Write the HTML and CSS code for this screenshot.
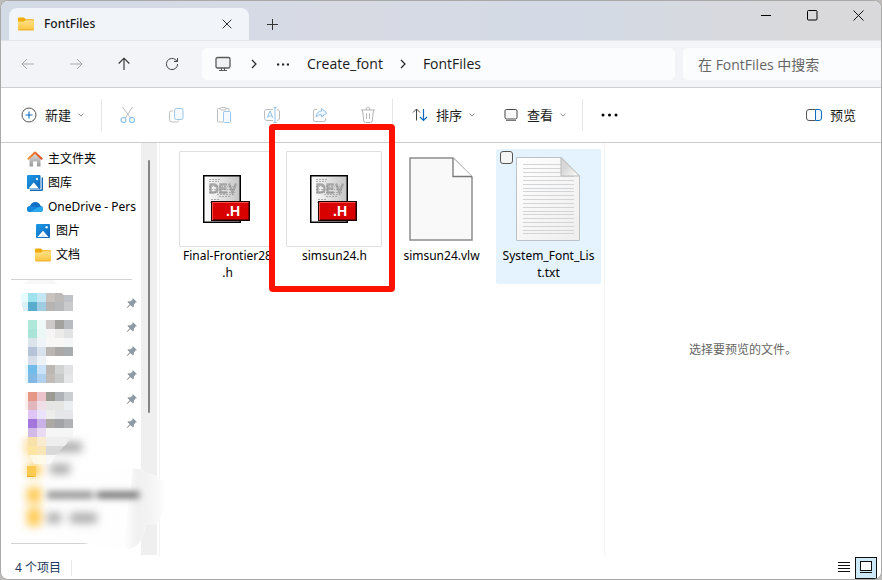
FILE: index.html
```html
<!DOCTYPE html>
<html lang="zh-CN">
<head>
<meta charset="utf-8">
<meta name="viewport" content="width=device-width, initial-scale=1">
<title>FontFiles</title>
<link rel="stylesheet" href="styles.css">
</head>
<body>
<svg class="defs" width="0" height="0" aria-hidden="true">
  <defs>
    <linearGradient id="gFolder" x1="0" y1="0" x2="0" y2="1"><stop offset="0" stop-color="#ffe08a"/><stop offset="1" stop-color="#fbc63c"/></linearGradient>
    <linearGradient id="gBlue" x1="0" y1="0" x2="1" y2="1"><stop offset="0" stop-color="#1d9be6"/><stop offset="1" stop-color="#0b62b8"/></linearGradient>
    <linearGradient id="gHouse" x1="0" y1="0" x2="0" y2="1"><stop offset="0" stop-color="#dedede"/><stop offset="1" stop-color="#9a9a9a"/></linearGradient>
    <linearGradient id="gRoof" x1="0" y1="0" x2="1" y2="0"><stop offset="0" stop-color="#f5963a"/><stop offset="1" stop-color="#dc4a1e"/></linearGradient>
    <linearGradient id="gPaper" x1="0" y1="0" x2="1" y2="1"><stop offset="0" stop-color="#ffffff"/><stop offset="1" stop-color="#eeeeee"/></linearGradient>
    <linearGradient id="gDev" x1="0" y1="0" x2="1" y2="0"><stop offset="0" stop-color="#ffffff"/><stop offset="1" stop-color="#c4c4c4"/></linearGradient>
    <linearGradient id="gFold" x1="0" y1="0" x2="1" y2="1"><stop offset=".4" stop-color="#d8d8d8"/><stop offset=".9" stop-color="#f8f8f8"/></linearGradient>
    <linearGradient id="gTrack" x1="0" y1="0" x2="1" y2="0"><stop offset="0" stop-color="#ffffff"/><stop offset=".35" stop-color="#f1f1f1"/><stop offset=".6" stop-color="#f3f3f3"/><stop offset="1" stop-color="#fdfdfd"/></linearGradient>
    <filter id="soft" filterUnits="userSpaceOnUse" x="0" y="420" width="165" height="130"><feGaussianBlur stdDeviation="4"/></filter>
    <filter id="fine" filterUnits="userSpaceOnUse" x="0" y="420" width="165" height="130"><feGaussianBlur stdDeviation="3"/></filter>
    <symbol id="folder" viewBox="0 0 16 14"><path d="M0 1.5Q0 .5 1 .5h4.6q.6 0 1 .5l1 1.3H15q1 0 1 1V7H0z" fill="#f0ac0c"/><path d="M0 4.6h6l1.6-1.4H15q1 0 1 1V12q0 1.2-1 1.2H1Q0 13.2 0 12z" fill="url(#gFolder)"/><path d="M.3 12.9h15.4" stroke="#e8a72a" stroke-width=".8"/></symbol>
    <symbol id="picture" viewBox="0 0 14 14"><rect width="14" height="14" rx="1" fill="url(#gBlue)"/><circle cx="10.6" cy="3.3" r="1.3" fill="#d8f0ff"/><path d="M1.5 13 7 6.8l5.5 6.2z" fill="#fff"/><path d="M4 13 7 9.6 10 13z" fill="#dcecf8"/></symbol>
    <symbol id="chev" viewBox="0 0 6 4"><path d="M.5.6 3 3.1 5.5.6" fill="none" stroke="#8c8c8c"/></symbol>
    <symbol id="pin" viewBox="0 0 12 12"><path d="M6.8 1 11 5.2 9.6 5.6 8 7.4 7.8 9.7 7 10.5 4.6 8.2 1 11.2.6 10.8 3.7 7.3 1.4 5 2.3 4.3 4.6 4.2 6.5 2.4z" fill="#8f9ba4"/></symbol>
    <symbol id="hfile" viewBox="0 0 48 48">
      <rect x=".75" y=".75" width="36.5" height="46.5" fill="url(#gDev)" stroke="#000" stroke-width="1.5"/>
      <g stroke="#a8a8a8" stroke-dasharray="2 1" stroke-width="1"><path d="M6 4.5h12M6 6.500h10M14 19.500h18M16 21.500h12M8 24.500h8M7 27.500h5"/></g>
      <g fill="none" stroke="#a6a6a6" stroke-width="2.400"><path d="M7.500 9.500h3q4 0 4 4t-4 4h-3zM24 9.500h-6.500v8h6.500M17.500 13.500h6M26 8.500l3.500 9 3.500-9"/></g>
      <path d="M6 11.500h26M6 14.500h26M6 17.500h26" stroke="#8c8c8c" stroke-opacity=".6" stroke-dasharray="2 1 1 1"/>
      <rect x="8.750" y="26.750" width="37.500" height="18.500" fill="#d90000" stroke="#210000" stroke-width="1.500"/>
      <path d="M9.500 45V27.500h36" fill="none" stroke="#ff5145"/>
      <text class="badge-text" x="23" y="41">.H</text>
    </symbol>
  </defs>
</svg>

<main class="window">
  <header class="titlebar">
    <div class="tab">
      <svg width="16" height="14"><use href="#folder"/></svg>
      <span class="tab-title">FontFiles</span>
      <button class="tab-close" aria-label="关闭标签页"><svg width="10" height="10" viewBox="0 0 10 10"><path d="M.7.7l8.600 8.600M9.300.7.7 9.300" fill="none" stroke="#333"/></svg></button>
    </div>
    <button class="new-tab" aria-label="新建标签页"><svg width="11" height="11" viewBox="0 0 11 11"><path d="M5.500 0v11M0 5.500h11" stroke="#333"/></svg></button>
    <div class="window-controls">
      <button aria-label="最小化"><svg width="11" height="11" viewBox="0 0 11 11"><path d="M0 5.500h10" stroke="#000"/></svg></button>
      <button aria-label="最大化"><svg width="11" height="11" viewBox="0 0 11 11"><rect x=".5" y=".5" width="9.500" height="9.500" rx="1" fill="none" stroke="#000"/></svg></button>
      <button aria-label="关闭"><svg width="11" height="11" viewBox="0 0 11 11"><path d="M.5.5l10 10M10.500.5l-10 10" stroke="#111"/></svg></button>
    </div>
  </header>

  <nav class="navbar" aria-label="导航">
    <button class="icon-btn" aria-label="后退" disabled><svg width="14" height="12" viewBox="0 0 14 12"><path d="M13 6H1M6 1 1 6l5 5" fill="none" stroke="#a5a5a8"/></svg></button>
    <button class="icon-btn" aria-label="前进" disabled><svg width="14" height="12" viewBox="0 0 14 12"><path d="M1 6h12M8 1l5 5-5 5" fill="none" stroke="#a5a5a8"/></svg></button>
    <button class="icon-btn" aria-label="上移"><svg width="12" height="14" viewBox="0 0 12 14"><path d="M6 13V1.500M.7 6.500 6 1.200l5.300 5.300" fill="none" stroke="#2d2d2d" stroke-width="1.100"/></svg></button>
    <button class="icon-btn" aria-label="刷新"><svg width="14" height="14" viewBox="0 0 14 14"><path d="M12.600 7A5.600 5.600 0 1 1 11 3.100L12.300 4.400M12.500 1v3.500H9" fill="none" stroke="#444"/></svg></button>
    <div class="address">
      <svg width="16" height="16" viewBox="0 0 16 16" fill="none" stroke="#5a5a5a"><rect x="1" y="1.500" width="14" height="10.500" rx="1.500" fill="#f0f1f2" stroke-width="1.300"/><path d="M6.500 12v2M9.500 12v2M4 14.500h8"/></svg>
      <svg class="crumb-chev first" width="6" height="10" viewBox="0 0 6 10"><path d="M1 1l4 4-4 4" fill="none" stroke="#222" stroke-width="1.200"/></svg>
      <button class="crumb-more" aria-label="更多位置"><svg width="12" height="3" viewBox="0 0 12 3"><path d="M0 .5h2.200v2H0zM5 .5h2.200v2H5zM9.800.5H12v2H9.800z" fill="#222"/></svg></button>
      <a href="#create">Create_font</a>
      <svg class="crumb-chev" width="6" height="10" viewBox="0 0 6 10"><path d="M1 1l4 4-4 4" fill="none" stroke="#222" stroke-width="1.200"/></svg>
      <a href="#files">FontFiles</a>
    </div>
    <input class="search" type="search" aria-label="搜索" placeholder="在 FontFiles 中搜索">
  </nav>

  <div class="toolbar" role="toolbar" aria-label="命令">
    <button class="command new"><svg width="16" height="16" viewBox="0 0 16 16"><circle cx="8" cy="8" r="7" fill="none" stroke="#555"/><path d="M8 4.500v7M4.500 8h7" stroke="#0f6cbd" stroke-width="1.100"/></svg><span>新建</span><svg class="down" width="6" height="4"><use href="#chev"/></svg></button>
    <i class="rule"></i>
    <button class="icon-btn" aria-label="剪切" disabled><svg width="16" height="18" viewBox="0 0 16 18" fill="none"><path d="M2.500 1 11 12.500M12.500 1 5 12.500" stroke="#bdbdbd"/><circle cx="3.500" cy="14" r="2.500" stroke="#8fc0e8" stroke-width="1.200"/><circle cx="12" cy="14" r="2.500" stroke="#8fc0e8" stroke-width="1.200"/></svg></button>
    <button class="icon-btn" aria-label="复制" disabled><svg width="16" height="16" viewBox="0 0 16 16" fill="none"><path d="M5 4H3Q1.500 4 1.500 5.500v7Q1.500 15 4 15h5q1.500 0 1.500-1.500" stroke="#c0c0c0"/><rect x="6.500" y="1.500" width="8.500" height="11" rx="2" fill="#f4faff" stroke="#9ac7ea"/></svg></button>
    <button class="icon-btn" aria-label="粘贴" disabled><svg width="16" height="18" viewBox="0 0 16 18" fill="none"><path d="M7 16H2.500Q1.500 16 1.500 15V3.500q0-1 1-1H12q1 0 1 1V5" stroke="#bdbdbd"/><rect x="4.500" y="1.500" width="5.500" height="2.500" rx="1" fill="#fff" stroke="#bdbdbd"/><rect x="7.500" y="5.500" width="7" height="11" rx="1" fill="#f4faff" stroke="#9ac7ea"/></svg></button>
    <button class="icon-btn" aria-label="重命名" disabled><svg width="16" height="16" viewBox="0 0 16 16" fill="none"><path d="M9 2.500H3Q.5 2.500.5 5v6q0 2.500 2.500 2.500h6M13 2.500q2.500 0 2.500 2.500v6q0 2.500-2.500 2.500" stroke="#bdbdbd"/><path d="M3 11l3-7 3 7M4 9h4M11 .5v15M9.500.5h3M9.500 15.500h3" stroke="#8fc0e8"/></svg></button>
    <button class="icon-btn" aria-label="共享" disabled><svg width="16" height="16" viewBox="0 0 16 16" fill="none"><path d="M5 2.500H3Q1.500 2.500 1.500 4v9q0 1.500 1.500 1.500h9q1.500 0 1.500-1.500v-2" stroke="#bdbdbd"/><path d="M9.500 1.500 14.800 6 9.500 10V7.700Q6 7.500 4 10q.5-5.500 5.500-6z" fill="#eff8ff" stroke="#8fc0e8"/></svg></button>
    <button class="icon-btn" aria-label="删除" disabled><svg width="16" height="18" viewBox="0 0 16 18" fill="none" stroke="#b5b5b5"><path d="M1 4h14M2.500 4l1.300 11q.2 1.500 1.700 1.500h5q1.500 0 1.700-1.500L13.500 4M5.800 4q0-2.500 2.200-2.500T10.200 4M6.500 7.500v5.500M9.500 7.500v5.500"/></svg></button>
    <i class="rule"></i>
    <button class="command"><svg width="16" height="14" viewBox="0 0 16 14" fill="none"><path d="M4.500 12.500V1M1 4.500 4.500 1 8 4.500" stroke="#444"/><path d="M11.500 1v11.500M8 9l3.500 3.500L15 9" stroke="#0f6cbd" stroke-width="1.200"/></svg><span>排序</span><svg class="down" width="6" height="4"><use href="#chev"/></svg></button>
    <button class="command view"><svg width="16" height="14" viewBox="0 0 16 14" fill="none" stroke="#444"><rect x="2" y="1.500" width="12" height="9.500" rx="1.500" fill="#fafafa"/><path d="M3 12.500h10" stroke="#777"/></svg><span>查看</span><svg class="down" width="6" height="4"><use href="#chev"/></svg></button>
    <i class="rule"></i>
    <button class="icon-btn" aria-label="更多"><svg width="17" height="4" viewBox="0 0 17 4"><circle cx="2" cy="2" r="1.500"/><circle cx="8.500" cy="2" r="1.500"/><circle cx="15" cy="2" r="1.500"/></svg></button>
    <button class="command preview-btn"><svg width="16" height="12" viewBox="0 0 16 12" fill="none"><path d="M9.500.5H3Q.5.5.5 3v6q0 2.500 2.500 2.500h6.500" stroke="#555"/><path d="M9.500.5H13q2.500 0 2.500 2.500v6q0 2.500-2.500 2.500H9.500z" fill="#eef7ff" stroke="#0f6cbd"/></svg><span>预览</span></button>
  </div>

  <div class="content">
    <aside class="sidebar">
      <ul class="places">
        <li><svg width="16" height="16" viewBox="0 0 16 16"><path d="M2.500 7 8 2l5.500 5v8.500H10V10.500H6v5H2.500z" fill="url(#gHouse)"/><path d="M.8 8.300 8 1.500l7.200 6.800" fill="none" stroke="url(#gRoof)" stroke-width="2" stroke-linejoin="round"/></svg>主文件夹</li>
        <li><svg width="16" height="16" viewBox="0 0 16 16"><path d="M3 15.300h11.500q.8 0 .8-.8V2.500" fill="none" stroke="#1269b5" stroke-width="1.400"/><rect width="13.500" height="14" rx="1" fill="url(#gBlue)"/><circle cx="10" cy="4" r="1.200" fill="#d8f0ff"/><path d="M1.500 13.500 6.700 7.500l5.300 6z" fill="#fff"/></svg>图库</li>
        <li><svg width="16" height="16" viewBox="0 0 16 16"><path d="M3 13Q0 12.800 0 10q0-2.500 3-3 1.500-4 5.500-4 3.500 0 5 3.700 2.500.6 2.500 3.300 0 3-3 3z" fill="#0f6fc6"/><path d="M3 13 10 8.500 15 7.500q1 .8 1 2.500 0 3-3 3z" fill="#2ba9ec"/><path d="M0 10q.2-2.700 3-3 2-.3 7 1.500L2.500 13Q0 12.500 0 10" fill="#1589dd"/></svg>OneDrive - Pers</li>
        <li class="child"><svg width="16" height="14"><use href="#picture"/></svg>图片</li>
        <li class="child"><svg width="16" height="14"><use href="#folder"/></svg>文档</li>
      </ul>
      <div class="pinned">
        <ul class="pins">
          <li><svg width="12" height="12"><use href="#pin"/></svg></li>
          <li><svg width="12" height="12"><use href="#pin"/></svg></li>
          <li><svg width="12" height="12"><use href="#pin"/></svg></li>
          <li><svg width="12" height="12"><use href="#pin"/></svg></li>
          <li><svg width="12" height="12"><use href="#pin"/></svg></li>
          <li><svg width="12" height="12"><use href="#pin"/></svg></li>
        </ul>
        <svg class="mosaic" width="165" height="276" viewBox="0 280 165 276" aria-hidden="true">
          <path d="M24 284q17-17 34 0z" fill="#f8f8f8"/>
          <path d="M24 436q-14 15 0 32-6 18-3 48 4 17 22 17 50 14 84 16 14-2 18-20V476q-6-6-14-8-30 5-50 5 0-18-10-36z" fill="#fefefe"/>
          <path d="M133 468q20 3 31 14 4 30-8 42l-11 1q-1 20-16 24l-6-1z" fill="url(#gTrack)"/>
          <path d="M27 466h9v11h-9z" fill="#f7c845"/><path d="M27 476.500h7" stroke="#e59b16"/>
          <g filter="url(#soft)"><path d="M32 438v18" stroke="#fbd98c" stroke-width="13"/><path d="M34 464v12M34 487v16M34 508v18" stroke="#ffcc58" stroke-width="14"/><path d="M46 447h36M50 469h20M47 518h14M70 518h27" stroke="#aaa" stroke-width="10"/></g>
          <g filter="url(#fine)"><path d="M47 495h46M96 495h44" stroke="#9a9a9a" stroke-width="8"/><path d="M99 495h37" stroke="#666" stroke-width="4"/></g>
          <g shape-rendering="crispEdges">
            <path d="M21 293h7v9h-7z" fill="#e7fcff"/><path d="M22 302h6v9h-5z" fill="#d9f0f6"/>
            <path d="M28 293h9v9h-9z" fill="#9ee2ed"/><path d="M37 293h9v9h-9z" fill="#c2e7f3"/><path d="M46 293h9v9h-9z" fill="#c8c3bf"/><path d="M55 293h6l3 2v7h-9z" fill="#bdbbba"/><path d="M64 295h9v7h-9z" fill="#bfc2c7"/>
            <path d="M28 302h9v9h-9z" fill="#58adcf"/><path d="M37 302h9v9h-9z" fill="#a0cce3"/><path d="M46 302h9v9h-9z" fill="#b7b3b0"/><path d="M55 302h9v9h-9z" fill="#b8b9bb"/><path d="M64 302h9v9h-9z" fill="#c9cacc"/>
            <path d="M28 320h9v9h-9z" fill="#b0e8d9"/><path d="M37 320h9v9h-9z" fill="#effaf8"/><path d="M46 320h9v9h-9z" fill="#cdc9c9"/><path d="M55 320h9v9h-9z" fill="#a3a29f"/><path d="M64 320h9v9h-9z" fill="#b8bbc0"/>
            <path d="M28 329h9v9h-9z" fill="#a9e4d8"/><path d="M37 329h9v9h-9z" fill="#ebf8f5"/><path d="M46 329h9v9h-9z" fill="#f5f5f5"/><path d="M55 329h9v9h-9z" fill="#ecebe9"/><path d="M64 329h9v9h-9z" fill="#e1e3e5"/>
            <path d="M28 338h9v9h-9z" fill="#dbe4eb"/><path d="M37 338h9v9h-9z" fill="#eff4f8"/><path d="M46 338h18v9H46z" fill="#f8f7f5"/><path d="M64 338h9v9h-9z" fill="#f4f6f8"/>
            <path d="M28 347h9v9h-9z" fill="#b5c5d7"/><path d="M37 347h9v9h-9z" fill="#d9e2ea"/><path d="M46 347h9v9h-9z" fill="#bcb6b2"/><path d="M55 347h9v9h-9z" fill="#aaa9a8"/><path d="M64 347h9v9h-9z" fill="#a7adaf"/>
            <path d="M28 356h9v9h-9z" fill="#d6dee9"/><path d="M37 356h9v9h-9z" fill="#edf2f7"/>
            <path d="M25 365h3v18h-3z" fill="#e8f7ff"/><path d="M28 365h9v9h-9z" fill="#72bce9"/><path d="M37 365h9v9h-9z" fill="#cae3f8"/><path d="M46 365h9v9h-9z" fill="#bbb8b3"/><path d="M55 365h9v9h-9z" fill="#d1d3d2"/><path d="M64 365h9v9h-9z" fill="#e0e2e4"/>
            <path d="M28 374h9v9h-9z" fill="#81b9e4"/><path d="M37 374h9v9h-9z" fill="#afd1ed"/><path d="M46 374h9v9h-9z" fill="#c0bbb6"/><path d="M55 374h9v9h-9z" fill="#c8cac9"/><path d="M64 374h9v9h-9z" fill="#e6e7e9"/>
            <path d="M25 392h3v18h-3z" fill="#fcf0ec"/><path d="M28 392h9v9h-9z" fill="#e59684"/><path d="M37 392h9v9h-9z" fill="#ebc3ca"/><path d="M46 392h9v9h-9z" fill="#9c9a92"/><path d="M55 392h9v9h-9z" fill="#afb3b7"/><path d="M64 392h9v9h-9z" fill="#caced1"/>
            <path d="M28 401h9v9h-9z" fill="#e1b6bc"/><path d="M37 401h9v9h-9z" fill="#efdee6"/><path d="M46 401h18v9H46z" fill="#e5e5e3"/><path d="M64 401h9v9h-9z" fill="#ebeef0"/>
            <path d="M28 410h9v9h-9z" fill="#dec5f6"/><path d="M37 410h9v9h-9z" fill="#ebe3fb"/><path d="M46 410h9v9h-9z" fill="#ededeb"/><path d="M55 410h18v9H55z" fill="#e5e6e9"/>
            <path d="M28 419h9v9h-9z" fill="#a376dc"/><path d="M37 419h9v9h-9z" fill="#cab1e8"/><path d="M46 419h9v9h-9z" fill="#aca8a4"/><path d="M55 419h9v9h-9z" fill="#a1a3a7"/><path d="M64 419h9v9h-9z" fill="#b0b2b6"/>
            <path d="M28 428h9v9h-9z" fill="#d2b9e8"/><path d="M37 428h9v9h-9z" fill="#e9dbf3"/><path d="M46 428h27v9H46z" fill="#f5f5f5"/>
            <path d="M28 437h9v9h-9z" fill="#f8e0aa"/><path d="M37 437h9v9h-9z" fill="#f8ebd0"/><path d="M46 437h25l-6 9H46z" fill="#eee"/>
            <path d="M28 446h9v9h-9z" fill="#fde5a4"/><path d="M37 446h9v9h-9z" fill="#f9e6b6"/><path d="M46 446h18l-9 9h-9z" fill="#d9d9d9"/>
            <path d="M30 455h7v9h-3z" fill="#fff8e6"/><path d="M37 455h9v9h-9z" fill="#fff9e8"/><path d="M46 455h10l-6 9h-4z" fill="#f8f8f8"/>
          </g>
        </svg>
      </div>
    </aside>
    <div class="scrollbar"><div class="thumb"></div></div>

    <section class="files" aria-label="文件">
      <figure class="file"><div class="thumbnail framed"><svg width="48" height="48"><use href="#hfile"/></svg></div><figcaption>Final-Frontier28<br>.h</figcaption></figure>
      <figure class="file marked"><div class="thumbnail framed"><svg width="48" height="48"><use href="#hfile"/></svg></div><figcaption>simsun24.h</figcaption></figure>
      <figure class="file"><div class="thumbnail"><svg width="64" height="84" viewBox="0 0 64 84"><path d="M1 1h43l19 19v63H1z" fill="#f9f9f9" stroke="#8c8c8c" stroke-width="1.500"/><path d="M44 1v18.500h19" fill="#fff" stroke="#777" stroke-width="1.300"/></svg></div><figcaption>simsun24.vlw</figcaption></figure>
      <figure class="file hovered">
        <input class="pick" type="checkbox" aria-label="选择 System_Font_List.txt">
        <div class="thumbnail"><svg width="64" height="84" viewBox="0 0 64 84"><path d="M.5.5H45L63.500 19v64.500H.5z" fill="url(#gPaper)" stroke="#bcc3c8"/><path d="M7 7.500h38M7 11.500h38M7 15.500h38M7 19.500h51M7 23.500h51M7 27.500h51M7 31.500h51M7 34.500h51M7 38.500h51M7 42.500h51M7 46.500h51M7 50.500h51M7 54.500h51M7 57.500h51M7 61.500h51M7 65.500h51M7 69.500h51M7 73.500h51M7 76.500h51" stroke="#d2d4d6"/><path d="M45 .5V19h18.500z" fill="url(#gFold)" stroke="#bbb"/></svg></div>
        <figcaption>System_Font_Lis<br>t.txt</figcaption>
      </figure>
    </section>
    <section class="preview"><p>选择要预览的文件。</p></section>
  </div>

  <footer class="status">
    <span class="count">4 个项目</span>
    <button class="mode" aria-label="详细信息"><svg width="12" height="11" viewBox="0 0 12 11"><path d="M0 .5h12M0 3.500h12M0 6.500h12M0 9.500h12" stroke="#111"/></svg></button>
    <button class="mode active" aria-label="大图标"><svg width="14" height="13" viewBox="0 0 14 13"><rect x="1.500" y=".5" width="11" height="9" fill="#fff" stroke="#111"/><path d="M1 11.500h12" stroke="#111"/></svg></button>
  </footer>
</main>
</body>
</html>
```
FILE: styles.css
```css
*,
*::after {
  box-sizing: border-box;
}

body {
  margin: 0;
  background: #bdbbba;
  color: #1a1a1a;
  font: 12px/16px "Noto Sans", "Noto Sans CJK SC", sans-serif;
}

.defs {
  position: absolute;
}

svg {
  display: block;
  flex: none;
}

button {
  display: flex;
  align-items: center;
  justify-content: center;
  padding: 0;
  border: 0;
  background: none;
  color: inherit;
  font: inherit;
}

a {
  color: inherit;
  text-decoration: none;
}

ul {
  margin: 0;
  padding: 0;
  list-style: none;
}

.window {
  display: flex;
  flex-direction: column;
  min-height: 100vh;
  overflow: hidden;
  border: 1px solid #a9a9aa;
  border-radius: 8px;
  background: #fff;
}

/* Title bar */
.titlebar {
  display: flex;
  height: 39px;
  padding: 7px 0 0 8px;
  background: linear-gradient(90deg, #d2dae6, #d7dae3 40%, #d3dae5 65%, #d9d9dc 90%);
}

.tab {
  display: flex;
  align-items: center;
  width: 240px;
  padding: 0 12px 0 9px;
  border-radius: 8px 8px 0 0;
  background: #f1f4f9;
}

.tab-title {
  margin-left: 10px;
  font: 500 12px/16px "Noto Sans", sans-serif;
}

.tab-close {
  width: 20px;
  height: 20px;
  margin-left: auto;
}

.new-tab {
  width: 46px;
}

.window-controls {
  display: flex;
  align-items: flex-start;
  margin-left: auto;
}

.window-controls button {
  width: 46px;
  height: 14px;
}

/* Navigation */
.navbar {
  display: flex;
  align-items: center;
  height: 48px;
  padding-left: 3px;
  border-top: 1px solid #e2e5ea;
  border-bottom: 1px solid #cfd0d4;
  background: #f2f4f8;
}

.icon-btn {
  width: 48px;
  height: 32px;
}

.address {
  display: flex;
  flex: 1;
  align-items: center;
  height: 32px;
  margin: 0 8px 0 6px;
  padding-left: 13px;
  border-radius: 5px;
  background: #fbfcfd;
  font: 14px/20px "Open Sans", sans-serif;
}

.crumb-chev {
  margin: 0 17px;
}

.crumb-chev.first {
  margin: 0 20px;
}

.crumb-more {
  width: 12px;
  height: 20px;
  margin-right: 18px;
}

.search {
  width: 198px;
  height: 32px;
  padding: 0 15px;
  border: 0;
  border-radius: 5px 0 0 5px;
  background: #fbfcfd;
  color: #666;
  font: 14px/20px "Open Sans", "Noto Sans CJK SC", sans-serif;
}

.search::placeholder {
  color: #666;
}

/* Commands */
.toolbar {
  display: flex;
  align-items: center;
  height: 55px;
  border-bottom: 1px solid #cbccd0;
}

.command {
  height: 32px;
  padding: 0 16px;
  font-size: 13px;
}

.command span {
  margin-left: 8px;
}

.command.new {
  padding: 0 17px 0 20px;
}

.down {
  margin-left: 7px;
}

.command.view {
  padding: 0 16px 0 12px;
}

.rule {
  width: 1px;
  height: 32px;
  margin-right: 2px;
  background: #e6e6e8;
}

.rule + .command {
  margin-left: 1px;
}

.preview-btn {
  margin-left: auto;
  padding-right: 25px;
}

/* Main panes */
.content {
  display: flex;
  flex: 1;
}

.sidebar {
  display: flex;
  flex-direction: column;
  width: 140px;
  padding: 4px 0 12px;
}

.places li {
  display: flex;
  align-items: center;
  gap: 5px;
  height: 24px;
  padding-left: 26px;
  white-space: nowrap;
  color: #000;
}

.places .child {
  padding-left: 34px;
}

.pinned {
  position: relative;
  flex: 1;
  margin: 12px 9px 0 10px;
  padding-top: 11px;
  border-top: 1px solid #d3d3d3;
  border-bottom: 1px solid #d3d3d3;
}

.pins li {
  display: flex;
  align-items: center;
  justify-content: flex-end;
  height: 24px;
  margin-right: -6px;
}

.mosaic {
  position: absolute;
  z-index: 1;
  top: 0;
  left: -11px;
}

.scrollbar {
  width: 16px;
  margin-bottom: 1px;
  padding: 17px 7px 0;
  background: #efefef;
}

.thumb {
  width: 2px;
  height: 253px;
  border-radius: 1px;
  background: #858585;
}

.files {
  display: flex;
  flex: 1;
  align-items: flex-start;
  gap: 2px;
  margin-left: 2px;
  padding: 6px 0 0 15px;
  border-left: 1px solid #f3f3f3;
}

.file {
  position: relative;
  flex: none;
  width: 105px;
  min-height: 135px;
  margin: 0;
  padding: 2px 0 3px;
  border-radius: 2px;
  color: #000;
  text-align: center;
}

.thumbnail {
  display: flex;
  align-items: center;
  justify-content: center;
  width: 96px;
  height: 96px;
  margin: 0 auto 0 4px;
}

.framed {
  border: 1px solid #e0e0e0;
  border-radius: 1px;
}

figcaption {
  line-height: 17px;
  white-space: nowrap;
}

.badge-text {
  fill: #fff;
  font: bold 14px "Liberation Sans", sans-serif;
}

.hovered {
  background: #e5f3ff;
}

.pick {
  position: absolute;
  top: 2px;
  left: 4px;
  width: 13px;
  height: 13px;
  margin: 0;
  border: 1px solid #555;
  border-radius: 3px;
  appearance: none;
  background: #f5f5f5;
}

.marked::after {
  position: absolute;
  z-index: 2;
  top: -25px;
  left: -13px;
  width: 126px;
  height: 168px;
  border: 6px solid #ff1100;
  border-radius: 4px;
  content: "";
}

.preview {
  display: flex;
  align-items: center;
  justify-content: center;
  width: 277px;
  border-left: 1px solid #f3f3f3;
  color: #666;
}

.preview p {
  margin: 0;
}

/* Status */
.status {
  display: flex;
  align-items: center;
  height: 23px;
  padding: 0 4px 0 14px;
}

.count {
  margin-right: auto;
  padding-right: 10px;
  border-right: 1px solid #e8e8e8;
  color: #1e395b;
}

.mode {
  width: 22px;
  height: 22px;
}

.mode.active {
  border: 1px solid #111;
  background: #cde8f6;
}
```
